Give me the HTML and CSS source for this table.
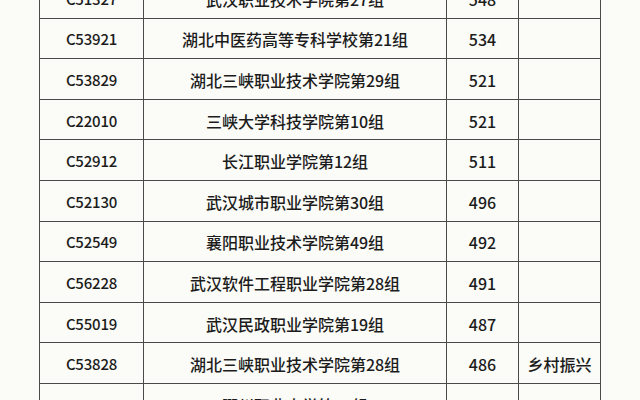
FILE: index.html
```html
<!DOCTYPE html>
<html lang="zh-CN">
<head>
<meta charset="utf-8">
<title>录取分数</title>
<link rel="stylesheet" href="styles.css">
</head>
<body>
<div class="page">
  <table class="scores">
    <colgroup>
      <col class="c-code"><col class="c-name"><col class="c-score"><col class="c-note">
    </colgroup>
    <tbody>
      <tr><td class="code">C51327</td><td>武汉职业技术学院第27组</td><td>548</td><td></td></tr>
      <tr><td class="code">C53921</td><td>湖北中医药高等专科学校第21组</td><td>534</td><td></td></tr>
      <tr><td class="code">C53829</td><td>湖北三峡职业技术学院第29组</td><td>521</td><td></td></tr>
      <tr><td class="code">C22010</td><td>三峡大学科技学院第10组</td><td>521</td><td></td></tr>
      <tr><td class="code">C52912</td><td>长江职业学院第12组</td><td>511</td><td></td></tr>
      <tr><td class="code">C52130</td><td>武汉城市职业学院第30组</td><td>496</td><td></td></tr>
      <tr><td class="code">C52549</td><td>襄阳职业技术学院第49组</td><td>492</td><td></td></tr>
      <tr><td class="code">C56228</td><td>武汉软件工程职业学院第28组</td><td>491</td><td></td></tr>
      <tr><td class="code">C55019</td><td>武汉民政职业学院第19组</td><td>487</td><td></td></tr>
      <tr><td class="code">C53828</td><td>湖北三峡职业技术学院第28组</td><td>486</td><td>乡村振兴</td></tr>
      <tr><td class="code">C53301</td><td>鄂州职业大学第01组</td><td>478</td><td></td></tr>
    </tbody>
  </table>
</div>
</body>
</html>
```

FILE: styles.css
```css
html, body {
  margin: 0;
  padding: 0;
  background: #fbfbf7;
}
.page {
  width: 640px;
  height: 400px;
  overflow: hidden;
}
.scores {
  margin: -23px 0 0 39px;
  border-collapse: collapse;
  table-layout: fixed;
  width: 561px;
  font-family: "Noto Sans CJK SC", "Noto Sans", sans-serif;
  font-size: 16px;
  font-weight: 500;
  color: #1c1c1c;
}
.c-code { width: 104px; }
.c-name { width: 303px; }
.c-score { width: 72px; }
.c-note { width: 82px; }
.scores tr { height: 40.6px; }
.scores td {
  border: 1px solid #4a4a4a;
  padding: 2px 0 0 0;
  text-align: center;
  vertical-align: middle;
  white-space: nowrap;
  line-height: 20px;
}
.scores td.code {
  font-size: 15px;
  letter-spacing: -0.2px;
}
```
